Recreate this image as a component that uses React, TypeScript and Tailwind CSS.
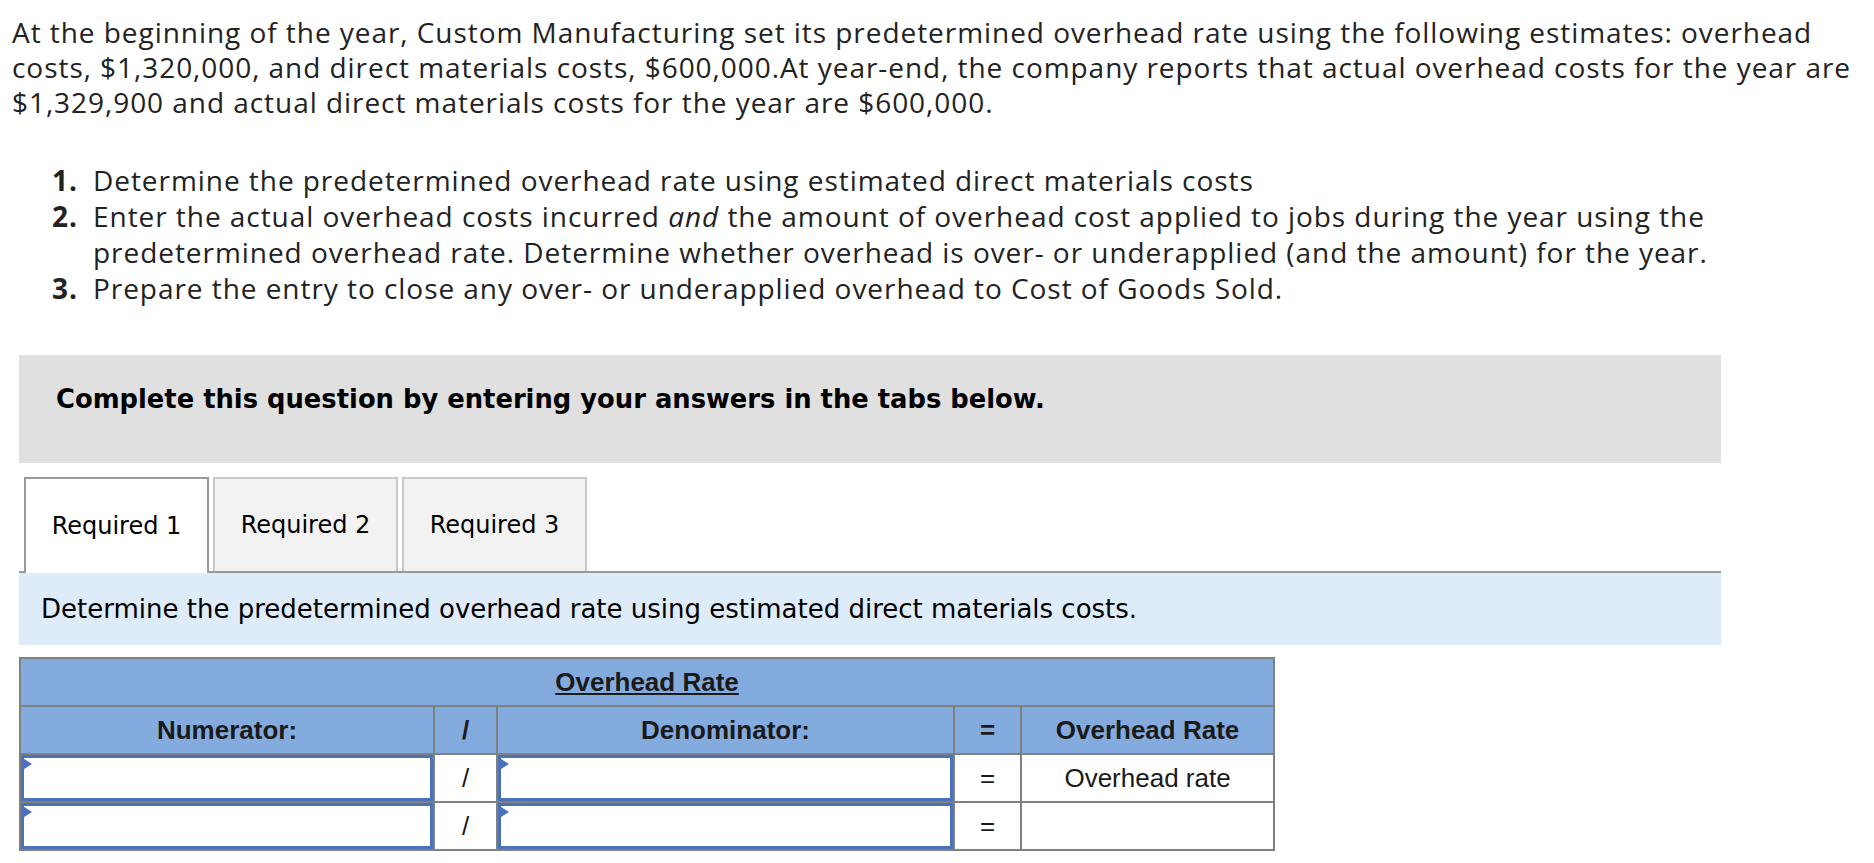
import React from 'react'

const tabs = ['Required 1', 'Required 2', 'Required 3']

function InputCell() {
  return (
    <td className="p-0 h-[48px] border-2 border-[#808080] bg-white">
      <div className="relative h-[46px] border-[3px] border-[#4a72b8] bg-white">
        <span className="absolute -left-[3px] -top-[1px] w-0 h-0 border-y-[7px] border-y-transparent border-l-[11px] border-l-[#4a72c0]" />
      </div>
    </td>
  )
}

export default function App() {
  return (
    <div className="w-[1874px] min-h-[863px] bg-white text-[#222]">
      <p className="pl-[12px] pt-[15px] text-[28px] leading-[35px] tracking-[0.95px] font-['Open_Sans',sans-serif] whitespace-nowrap">
        At the beginning of the year, Custom Manufacturing set its predetermined overhead rate using the following estimates: overhead
        <br />
        costs, $1,320,000, and direct materials costs, $600,000.At year-end, the company reports that actual overhead costs for the year are
        <br />
        $1,329,900 and actual direct materials costs for the year are $600,000.
      </p>

      <ol className="mt-[42px] font-['Open_Sans',sans-serif] text-[28px] leading-[36px] tracking-[0.95px] whitespace-nowrap">
        <li className="flex">
          <span className="w-[78px] text-right font-bold">1.</span>
          <span className="pl-[15px]">Determine the predetermined overhead rate using estimated direct materials costs</span>
        </li>
        <li className="flex">
          <span className="w-[78px] text-right font-bold">2.</span>
          <span className="pl-[15px]">
            Enter the actual overhead costs incurred <em>and</em> the amount of overhead cost applied to jobs during the year using the
            <br />
            predetermined overhead rate. Determine whether overhead is over- or underapplied (and the amount) for the year.
          </span>
        </li>
        <li className="flex">
          <span className="w-[78px] text-right font-bold">3.</span>
          <span className="pl-[15px]">Prepare the entry to close any over- or underapplied overhead to Cost of Goods Sold.</span>
        </li>
      </ol>

      <div className="ml-[19px] mt-[49px] w-[1702px] h-[108px] bg-[#e0e0e0] pl-[37px] pt-[28px]">
        <p className="font-['DejaVu_Sans',Verdana,sans-serif] font-bold text-[25.8px] leading-[32px] text-black whitespace-nowrap">
          Complete this question by entering your answers in the tabs below.
        </p>
      </div>

      <div className="ml-[19px] mt-[14px] w-[1702px]">
        <div className="flex items-end border-b-2 border-[#999] h-[96px]">
          <div className="w-[5px]" />
          {tabs.map((t, i) => (
            <div
              key={t}
              className={
                i === 0
                  ? 'w-[185px] h-[96px] -mb-[2px] bg-white border-2 border-b-0 border-[#999] flex items-center justify-center font-["DejaVu_Sans",Verdana,sans-serif] text-[24px] text-black'
                  : 'ml-[4px] w-[185px] h-[94px] bg-[#f2f2f2] border-2 border-b-0 border-[#c8c8c8] flex items-center justify-center font-["DejaVu_Sans",Verdana,sans-serif] text-[24px] text-black'
              }
            >
              {t}
            </div>
          ))}
        </div>
        <div className="h-[72px] bg-[#deebf8] pl-[22px] flex items-center">
          <p className="font-['DejaVu_Sans',Verdana,sans-serif] text-[26px] text-black whitespace-nowrap">
            Determine the predetermined overhead rate using estimated direct materials costs.
          </p>
        </div>
      </div>

      <table className="ml-[19px] mt-[12px] border-collapse table-fixed w-[1254px] font-['Liberation_Sans',Arial,sans-serif] text-[26px] text-[#1a1a1a]">
        <colgroup>
          <col className="w-[414px]" />
          <col className="w-[63px]" />
          <col className="w-[457px]" />
          <col className="w-[67px]" />
          <col className="w-[253px]" />
        </colgroup>
        <tbody>
          <tr className="h-[48px] bg-[#84abde]">
            <td colSpan={5} className="border-2 border-[#808080] text-center font-bold underline">
              Overhead Rate
            </td>
          </tr>
          <tr className="h-[48px] bg-[#84abde] font-bold">
            <td className="border-2 border-[#808080] text-center">Numerator:</td>
            <td className="border-2 border-[#808080] text-center">/</td>
            <td className="border-2 border-[#808080] text-center">Denominator:</td>
            <td className="border-2 border-[#808080] text-center">=</td>
            <td className="border-2 border-[#808080] text-center">Overhead Rate</td>
          </tr>
          <tr className="h-[48px]">
            <InputCell />
            <td className="border-2 border-[#808080] text-center">/</td>
            <InputCell />
            <td className="border-2 border-[#808080] text-center">=</td>
            <td className="border-2 border-[#808080] text-center">Overhead rate</td>
          </tr>
          <tr className="h-[48px]">
            <InputCell />
            <td className="border-2 border-[#808080] text-center">/</td>
            <InputCell />
            <td className="border-2 border-[#808080] text-center">=</td>
            <td className="border-2 border-[#808080] text-center"></td>
          </tr>
        </tbody>
      </table>
    </div>
  )
}
